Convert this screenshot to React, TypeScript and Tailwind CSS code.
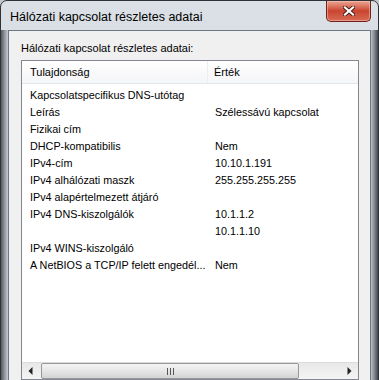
import React from "react";

const rows: [string, string][] = [
  ["Kapcsolatspecifikus DNS-utótag", ""],
  ["Leírás", "Szélessávú kapcsolat"],
  ["Fizikai cím", ""],
  ["DHCP-kompatibilis", "Nem"],
  ["IPv4-cím", "10.10.1.191"],
  ["IPv4 alhálózati maszk", "255.255.255.255"],
  ["IPv4 alapértelmezett átjáró", ""],
  ["IPv4 DNS-kiszolgálók", "10.1.1.2"],
  ["", "10.1.1.10"],
  ["IPv4 WINS-kiszolgáló", ""],
  ["A NetBIOS a TCP/IP felett engedél...", "Nem"],
];

function Arrow({ dir }: { dir: "left" | "right" }) {
  return (
    <svg width="5" height="8" viewBox="0 0 5 8">
      {dir === "left" ? (
        <path d="M4.5 0 L0.5 4 L4.5 8 Z" fill="#222" />
      ) : (
        <path d="M0.5 0 L4.5 4 L0.5 8 Z" fill="#222" />
      )}
    </svg>
  );
}

function CloseButton() {
  return (
    <div className="w-[45px] h-[21px] rounded-b-[5px] border border-t-0 border-[#6e2219] bg-gradient-to-b from-[#e9a594] via-[#c9442f] to-[#d86b55] flex items-center justify-center shadow-[inset_0_0_0_1px_rgba(255,200,190,0.5)]">
      <svg width="12" height="10" viewBox="0 0 12 10">
        <path d="M2 1.5 L10 8.5 M10 1.5 L2 8.5" stroke="#4a1a14" strokeWidth="4" strokeLinecap="square" />
        <path d="M2 1.5 L10 8.5 M10 1.5 L2 8.5" stroke="#ffffff" strokeWidth="2.2" strokeLinecap="square" />
      </svg>
    </div>
  );
}

export default function App() {
  return (
    <div className="w-[379px] h-[380px] overflow-hidden bg-[#c4c7cb] font-['Liberation_Sans',Arial,sans-serif] text-black">
      <div className="w-[379px] h-[400px] rounded-t-[7px] border border-[#2f3236] bg-gradient-to-b from-[#dbe0e6] to-[#c9d0d8] flex flex-col">
        <div className="h-[29px] shrink-0 flex justify-between pl-[9px] pr-[7px]">
          <span className="text-[12.5px] leading-[29px] pt-[2px]">Hálózati kapcsolat részletes adatai</span>
          <CloseButton />
        </div>
        <div className="flex h-[369px]">
          <div className="w-[7px] bg-gradient-to-r from-[#55595e] via-[#8f949a] to-[#c6cbd1]" />
          <div className="w-[363px] border border-[#6f7680] bg-[#f0f0f0] pl-[12px] pr-[11px] pt-[10px]">
            <div className="text-[11px] leading-[15px] mb-[4px]">Hálózati kapcsolat részletes adatai:</div>
            <div className="h-[320px] border border-[#828790] bg-white flex flex-col">
              <div className="h-[23px] shrink-0 flex border-b border-[#e3e6ea] bg-gradient-to-b from-white to-[#f4f5f7] text-[11px]">
                <div className="w-[186px] pl-[8px] pt-[1px] flex items-center border-r border-[#eceef0]">Tulajdonság</div>
                <div className="flex-1 pl-[6px] pt-[1px] flex items-center">Érték</div>
              </div>
              <div className="h-[278px] shrink-0 pt-[3px] text-[10.8px]">
                {rows.map(([name, value], i) => (
                  <div key={i} className="h-[17px] flex items-center">
                    <div className="w-[186px] pl-[8px] whitespace-nowrap overflow-hidden">{name}</div>
                    <div className="flex-1 pl-[7px] whitespace-nowrap">{value}</div>
                  </div>
                ))}
              </div>
              <div className="h-[17px] shrink-0 flex bg-gradient-to-b from-[#e8e8e8] to-[#f4f4f4] border-t border-[#dcdcdc]">
                <div className="w-[17px] flex items-center justify-center">
                  <Arrow dir="left" />
                </div>
                <div className="ml-[2px] w-[258px] rounded-[2px] border border-[#979797] bg-gradient-to-b from-[#f4f4f4] via-[#e6e6e6] to-[#d3d3d3] flex items-center justify-center">
                  <svg width="9" height="7" viewBox="0 0 9 7">
                    <path d="M1.5 0 V7 M4.5 0 V7 M7.5 0 V7" stroke="#555" strokeWidth="1" />
                  </svg>
                </div>
                <div className="flex-1" />
                <div className="w-[17px] flex items-center justify-center">
                  <Arrow dir="right" />
                </div>
              </div>
            </div>
          </div>
          <div className="w-[7px] bg-gradient-to-r from-[#b9bfc6] via-[#80868d] to-[#45494e]" />
        </div>
      </div>
    </div>
  );
}
